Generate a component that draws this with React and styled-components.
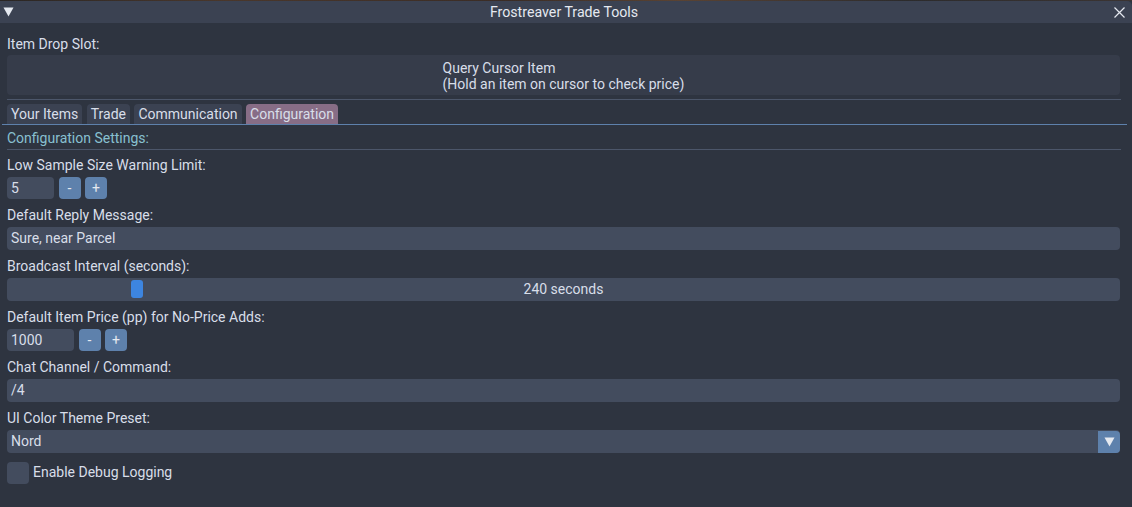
import React from "react";
import styled, { createGlobalStyle } from "styled-components";

const GlobalStyle = createGlobalStyle`
  html, body { margin: 0; padding: 0; background: #2e3440; }
  body { font-family: Roboto, "Noto Sans", "Liberation Sans", sans-serif; }
  * { box-sizing: border-box; }
`;

const Window = styled.div`
  width: 1132px;
  height: 507px;
  display: flex;
  flex-direction: column;
  background: #2e3440;
  color: #d8dee9;
  font-size: 14px;
  overflow: hidden;
`;

const Backdrop = styled.div`
  height: 1px;
  background: linear-gradient(90deg, #2a2624 0%, #4a372b 20%, #3a2c25 45%, #5a4333 60%, #2c2b2c 80%, #3b3432 100%);
`;

const TitleBar = styled.div`
  height: 22px;
  background: #3b4252;
  border-top-right-radius: 5px;
  display: grid;
  grid-template-columns: 1fr auto 1fr;
  align-items: center;
  color: #e5e9f0;
`;

const CollapseIcon = styled.svg`
  width: 11px;
  height: 10px;
  margin-left: 3px;
  display: block;
`;

const CloseIcon = styled.svg`
  width: 11px;
  height: 11px;
  justify-self: end;
  margin-right: 7px;
  display: block;
`;

const Title = styled.div`
  font-size: 14.2px;
  line-height: 18px;
  padding-right: 4px;
`;

const Body = styled.div`
  flex: 1;
  display: flex;
  flex-direction: column;
  padding: 12px 12px 0 7px;
`;

const Label = styled.div`
  line-height: 19px;
  height: 17px;
  white-space: nowrap;
  margin-bottom: ${(p) => p.$mb ?? 4}px;
  color: ${(p) => (p.$accent ? "#88c0d0" : "#d8dee9")};
`;

const BigButton = styled.div`
  height: 40px;
  background: #363c4a;
  border-radius: 4px;
  display: flex;
  align-items: center;
  justify-content: center;
  padding-top: 1px;
`;

const ButtonText = styled.div`
  line-height: 16px;
  text-align: left;
`;

const Separator = styled.div`
  height: 1px;
  background: #4c566a;
  margin-top: ${(p) => p.$mt}px;
  margin-bottom: ${(p) => p.$mb}px;
  margin-right: -1px;
`;

const TabBar = styled.div`
  display: flex;
  gap: 4.5px;
  margin: 0 -7px 0 -5px;
  padding-left: 5px;
  border-bottom: 1px solid #5e81ac;
`;

const Tab = styled.div`
  height: 20px;
  line-height: 21px;
  padding: 0 4px;
  border-radius: 4px 4px 0 0;
  background: ${(p) => (p.$active ? "#876d86" : "#3b4252")};
  color: #d8dee9;
  white-space: nowrap;
`;

const Section = styled.div`
  display: flex;
  flex-direction: column;
  margin-top: ${(p) => p.$mt ?? 7}px;
`;

const Row = styled.div`
  display: flex;
  align-items: center;
  gap: ${(p) => p.$gap ?? 5}px;
`;

const Frame = styled.div`
  height: 22px;
  line-height: 23px;
  padding: 0 4px;
  background: #434c5e;
  border-radius: 4px;
  width: ${(p) => (p.$w ? `${p.$w}px` : "auto")};
  flex: ${(p) => (p.$w ? "none" : "1")};
  white-space: nowrap;
  position: relative;
`;

const StepButton = styled.div`
  width: 22px;
  height: 22px;
  line-height: 22px;
  border-radius: 4px;
  background: #5e81ac;
  color: #e5e9f0;
  text-align: center;
`;

const SliderFrame = styled(Frame)`
  text-align: center;
`;

const SliderGrab = styled.div`
  position: absolute;
  top: 2px;
  width: 12px;
  height: 18px;
  border-radius: 3px;
  background: #3d85e0;
`;

const Combo = styled(Frame)`
  display: flex;
  padding-right: 0;
  align-items: center;
`;

const ComboValue = styled.div`
  flex: 1;
`;

const ComboArrow = styled.div`
  width: 22px;
  height: 22px;
  background: #5e81ac;
  border-radius: 0 4px 4px 0;
  display: flex;
  align-items: center;
  justify-content: center;
`;

const Checkbox = styled.div`
  width: 22px;
  height: 22px;
  border-radius: 4px;
  background: #434c5e;
`;

const CheckLabel = styled.div`
  line-height: 23px;
`;

function Stepper({ value, width }) {
  return (
    <Row $gap={4.5}>
      <Frame $w={width}>{value}</Frame>
      <StepButton>-</StepButton>
      <StepButton>+</StepButton>
    </Row>
  );
}

export default function App() {
  const min = 30;
  const max = 1920;
  const value = 240;
  const usable = 1112 - 4 - 12;
  const grabLeft = 2 + ((value - min) / (max - min)) * usable;

  return (
    <Window>
      <GlobalStyle />
      <Backdrop />
      <TitleBar>
        <CollapseIcon viewBox="0 0 11 10">
          <polygon points="0.5,0.5 10.5,0.5 5.5,9.5" fill="#e5e9f0" />
        </CollapseIcon>
        <Title>Frostreaver Trade Tools</Title>
        <CloseIcon viewBox="0 0 11 11">
          <path d="M0.5 0.5 L10.5 10.5 M10.5 0.5 L0.5 10.5" stroke="#e5e9f0" strokeWidth="1.2" fill="none" />
        </CloseIcon>
      </TitleBar>
      <Body>
        <Label $mb={3}>Item Drop Slot:</Label>
        <BigButton>
          <ButtonText>
            Query Cursor Item
            <br />
            (Hold an item on cursor to check price)
          </ButtonText>
        </BigButton>
        <Separator $mt={4} $mb={4} />
        <TabBar>
          <Tab>Your Items</Tab>
          <Tab>Trade</Tab>
          <Tab>Communication</Tab>
          <Tab $active>Configuration</Tab>
        </TabBar>
        <Section $mt={4}>
          <Label $accent $mb={0}>Configuration Settings:</Label>
          <Separator $mt={3} $mb={6} />
        </Section>
        <Section $mt={0}>
          <Label>Low Sample Size Warning Limit:</Label>
          <Stepper value="5" width={47} />
        </Section>
        <Section>
          <Label>Default Reply Message:</Label>
          <Frame>Sure, near Parcel</Frame>
        </Section>
        <Section>
          <Label>Broadcast Interval (seconds):</Label>
          <SliderFrame>
            <SliderGrab style={{ left: `${grabLeft}px` }} />
            240 seconds
          </SliderFrame>
        </Section>
        <Section>
          <Label>Default Item Price (pp) for No-Price Adds:</Label>
          <Stepper value="1000" width={67} />
        </Section>
        <Section>
          <Label>Chat Channel / Command:</Label>
          <Frame>/4</Frame>
        </Section>
        <Section>
          <Label>UI Color Theme Preset:</Label>
          <Combo>
            <ComboValue>Nord</ComboValue>
            <ComboArrow>
              <svg width="11" height="10" viewBox="0 0 11 10">
                <polygon points="0.5,0.5 10.5,0.5 5.5,9.5" fill="#e5e9f0" />
              </svg>
            </ComboArrow>
          </Combo>
        </Section>
        <Section $mt={8}>
          <Row $gap={4}>
            <Checkbox />
            <CheckLabel>Enable Debug Logging</CheckLabel>
          </Row>
        </Section>
      </Body>
    </Window>
  );
}
